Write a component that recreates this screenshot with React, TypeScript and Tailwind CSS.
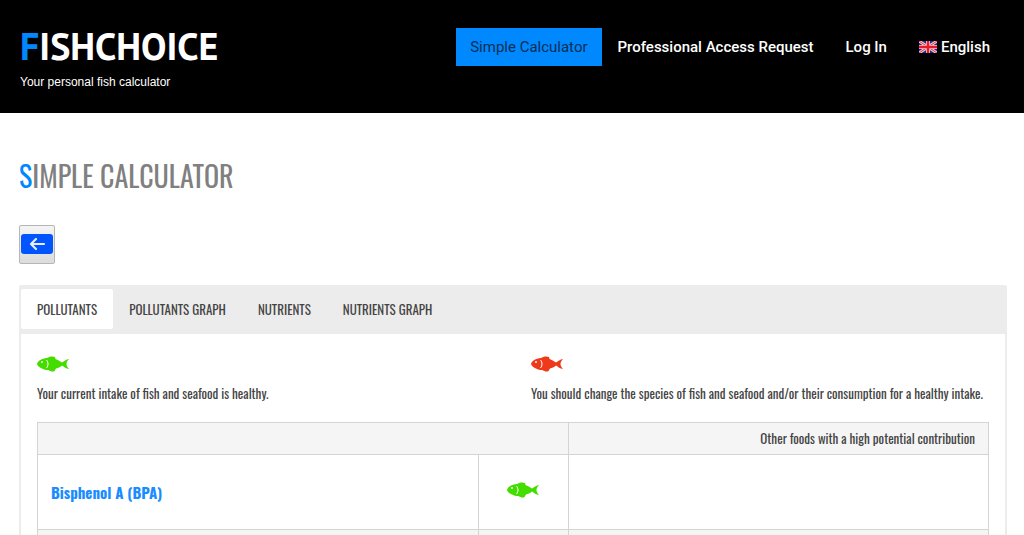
import { useState } from "react";

const navLinks = ["Professional Access Request", "Log In"];

const tabs = ["Pollutants", "Pollutants Graph", "Nutrients", "Nutrients Graph"];

function Fish({ className, label }: { className: string; label: string }) {
  return (
    <svg viewBox="0 0 64 32" className={`h-4 w-8 ${className}`} role="img" aria-label={label}>
      <path
        fill="currentColor"
        d="M0 16C2 9 9 5 20 4c4-3 11-4 16-2l1 4c5 2 8 4 13 7 4-3 8-6 14-7-3 4-5 6-5 10s2 6 5 10c-6-1-10-4-14-7-4 4-8 5-12 6l-3 5c-3 2-8 1-12-2-5 0-9-1-13-3C6 23 1 21 0 16Z"
      />
      <circle cx="10" cy="12" r="2" fill="white" />
      <path d="M19 8c4 5 4 11 0 16" fill="none" stroke="white" strokeWidth="2" />
    </svg>
  );
}

function Flag() {
  return (
    <svg viewBox="0 0 18 12" className="h-3 w-[18px]" aria-hidden="true">
      <path fill="#24249c" d="M0 0h18v12H0z" />
      <path stroke="#f3c9d3" strokeWidth="3" d="M0 0l18 12M18 0L0 12" />
      <path stroke="#e5343c" strokeWidth="1" d="M0 0l18 12M18 0L0 12" />
      <path stroke="#f3c9d3" strokeWidth="4" d="M9 0v12M0 6h18" />
      <path stroke="#e31b23" strokeWidth="2.4" d="M9 0v12M0 6h18" />
    </svg>
  );
}

function Header() {
  return (
    <header className="flex items-start justify-between bg-black px-5 pt-7 pb-5 text-white">
      <div>
        <a
          href="#"
          className="block font-['PT_Sans','Open_Sans',sans-serif] text-[38px] leading-9 font-bold"
        >
          <span className="text-[#0088ff]">F</span>ISHCHOICE
        </a>
        <p className="mt-2 font-['Liberation_Sans',Arial,sans-serif] text-xs leading-[21px]">
          Your personal fish calculator
        </p>
      </div>
      <nav className="flex items-center gap-4 font-[Roboto,sans-serif] text-[15px] leading-[38px] font-medium">
        <a href="#" aria-current="page" className="bg-[#0088ff] px-[14px] font-normal text-[#0b2f52]">
          Simple Calculator
        </a>
        <a href="#">{navLinks[0]}</a>
        <a href="#" className="px-4">
          {navLinks[1]}
        </a>
        <a href="#" className="flex items-center gap-1 pr-[14px]">
          <Flag />
          English
        </a>
      </nav>
    </header>
  );
}

export default function App() {
  const [active, setActive] = useState(tabs[0]);

  return (
    <div className="min-h-screen overflow-hidden bg-white font-[Oswald,'Roboto_Condensed','Liberation_Sans_Narrow',sans-serif] text-[#444]">
      <Header />

      <main className="pt-10 pr-[17px] pl-[19px]">
        <h1 className="text-[28px] leading-[46px] text-[#808080] uppercase">
          <span className="text-[#0088ff]">S</span>imple Calculator
        </h1>

        <button
          type="button"
          aria-label="Back"
          className="mt-[26px] flex h-[39px] w-9 items-center justify-center rounded-xs border border-[#b5b5b5] bg-linear-to-b from-[#f4f4f4] to-[#dcdcdc] pb-[2px]"
        >
          <svg viewBox="0 0 32 20" className="h-5 w-8 shrink-0">
            <rect width="32" height="20" rx="3" fill="#0055ff" />
            <path
              d="M23 10H10M15 5l-5 5 5 5"
              fill="none"
              stroke="#e9eefc"
              strokeWidth="2.2"
              strokeLinecap="round"
              strokeLinejoin="round"
            />
          </svg>
        </button>

        <section className="mt-[21px] rounded-xs border-2 border-[#ececec]">
          <div role="tablist" className="flex bg-[#ececec] pt-[2px] pb-[5px]">
            {tabs.map((tab) => (
              <button
                key={tab}
                type="button"
                role="tab"
                aria-selected={active === tab}
                onClick={() => setActive(tab)}
                className={`rounded-xs px-4 text-[13px] leading-10 uppercase ${
                  active === tab ? "bg-white" : ""
                }`}
              >
                {tab}
              </button>
            ))}
          </div>

          <div className="px-4 pt-[22px]">
            <div className="grid grid-cols-2 gap-9 text-[13px] leading-5">
              <div>
                <Fish className="text-[#44dd00]" label="Healthy" />
                <p className="mt-[11px] whitespace-nowrap">
                  Your current intake of fish and seafood is healthy.
                </p>
              </div>
              <div>
                <Fish className="text-[#ee3a1a]" label="Unhealthy" />
                <p className="mt-[11px] whitespace-nowrap">
                  You should change the species of fish and seafood and/or their consumption for a
                  healthy intake.
                </p>
              </div>
            </div>

            <table className="mt-[19px] w-full table-fixed border-collapse text-[13px]">
              <colgroup>
                <col className="w-[46.4%]" />
                <col className="w-[9.4%]" />
                <col />
              </colgroup>
              <thead>
                <tr className="bg-[#f5f5f5]">
                  <th colSpan={2} className="border border-[#d4d4d4]" />
                  <th className="h-8 border border-[#d4d4d4] px-[13px] text-right font-normal">
                    Other foods with a high potential contribution
                  </th>
                </tr>
              </thead>
              <tbody>
                <tr className="h-[75px]">
                  <td className="border border-[#d4d4d4] px-[13px]">
                    <a href="#" className="text-[15px] font-bold text-[#1a8cff]">
                      Bisphenol A (BPA)
                    </a>
                  </td>
                  <td className="border border-[#d4d4d4]">
                    <Fish className="mx-auto mb-1 text-[#44dd00]" label="Healthy" />
                  </td>
                  <td className="border border-[#d4d4d4]" />
                </tr>
                <tr className="h-2 bg-[#f5f5f5]">
                  <td className="border border-[#d4d4d4]" />
                  <td className="border border-[#d4d4d4]" />
                  <td className="border border-[#d4d4d4]" />
                </tr>
              </tbody>
            </table>
          </div>
        </section>
      </main>
    </div>
  );
}
